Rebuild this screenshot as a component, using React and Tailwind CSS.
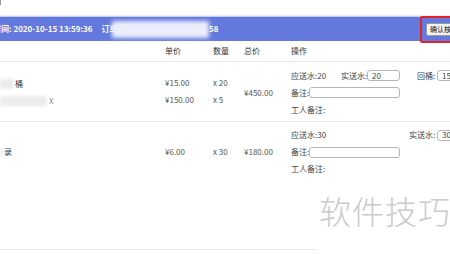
const font = { fontFamily: '"Noto Sans CJK SC", "Liberation Sans", sans-serif' };

const Field = ({ value = '', className = '' }) => (
  <div className={`h-[11px] border border-[#b5b5b5] rounded-[3px] bg-white flex items-center pl-[4px] text-[8px] text-[#444] leading-none ${className}`}>
    {value}
  </div>
);

const Blur = ({ className = '' }) => (
  <span className={`inline-block bg-[#ececec] blur-[1.5px] rounded-[2px] ${className}`} />
);

export default function App() {
  return (
    <div style={font} className="relative w-[450px] h-[254px] overflow-hidden bg-white text-[8px] text-[#333] leading-none">
      <div className="h-[16px] border-b border-[#eef0f8]">
        <div className="w-[1px] h-[5px] bg-[#999]" />
      </div>

      {/* order bar */}
      <div className="h-[25px] bg-[#6479dd] border-t border-[#c6cdf2] flex items-center text-white font-bold text-[8px] whitespace-nowrap">
        <span className="-ml-[7px]">时间: 2020-10-15 13:59:36</span>
        <span className="ml-[9px]">订单号:</span>
        <span className="-ml-[16px] w-[97px] h-[17px] bg-[#eceffb] blur-[2px]" />
        <span>58</span>
      </div>

      {/* header */}
      <div className="h-[21px] grid grid-cols-[165px_48px_31px_47px_1fr] items-center border-b border-[#e8e8e8] text-[#333]">
        <span />
        <span>单价</span>
        <span>数量</span>
        <span>总价</span>
        <span>操作</span>
      </div>

      {/* row 1 */}
      <div className="h-[60px] grid grid-cols-[165px_48px_31px_47px_1fr] items-center border-b border-[#e8e8e8] text-[#555]">
        <div className="flex flex-col gap-[7px] pt-[2px]">
          <div className="flex items-center h-[10px]">
            <Blur className="w-[14px] h-[10px]" />
            <span className="ml-[1px] text-[#333]">桶</span>
          </div>
          <div className="flex items-center h-[10px]">
            <Blur className="w-[47px] h-[10px]" />
            <span className="ml-[2px] text-[#888]">X</span>
          </div>
        </div>
        <div className="flex flex-col gap-[7px] pt-[2px]">
          <span className="h-[10px]">¥15.00</span>
          <span className="h-[10px]">¥150.00</span>
        </div>
        <div className="flex flex-col gap-[7px] pt-[2px]">
          <span className="h-[10px]">x 20</span>
          <span className="h-[10px]">x 5</span>
        </div>
        <span className="pt-[2px]">¥450.00</span>
        <div className="flex flex-col gap-[6px] pt-[2px] whitespace-nowrap text-[#444]">
          <div className="flex items-center h-[11px]">
            <span className="w-[50px]">应送水:20</span>
            <span className="w-[26px]">实送水:</span>
            <Field value="20" className="w-[33px]" />
            <span className="ml-[17px] w-[20px]">回桶:</span>
            <Field value="15" className="w-[30px]" />
          </div>
          <div className="flex items-center h-[11px]">
            <span className="w-[18px]">备注:</span>
            <Field className="w-[91px]" />
          </div>
          <div className="flex items-center h-[11px]">
            <span>工人备注:</span>
          </div>
        </div>
      </div>

      {/* row 2 */}
      <div className="h-[128px] border-b border-[#e8e8e8] pt-[6px] text-[#555]">
        <div className="h-[48px] grid grid-cols-[165px_48px_31px_47px_1fr] items-center">
          <div className="flex items-center h-[10px]">
            <Blur className="w-[3px] h-[9px]" />
            <span className="ml-[1px] text-[#333]">录</span>
          </div>
          <span>¥6.00</span>
          <span>x 30</span>
          <span>¥180.00</span>
          <div className="flex flex-col gap-[6px] whitespace-nowrap text-[#444]">
            <div className="flex items-center h-[11px]">
              <span className="w-[118px]">应送水:30</span>
              <span className="w-[28px]">实送水:</span>
              <Field value="30" className="w-[33px]" />
            </div>
            <div className="flex items-center h-[11px]">
              <span className="w-[18px]">备注:</span>
              <Field className="w-[91px]" />
            </div>
            <div className="flex items-center h-[11px]">
              <span>工人备注:</span>
            </div>
          </div>
        </div>
      </div>

      {/* highlighted confirm button */}
      <div className="absolute left-[420px] top-[16px] w-[40px] h-[27px] border-2 border-[#e0242a] rounded-[2px] flex items-center pl-[4px]">
        <div className="h-[13px] px-[3px] bg-[#f4f4f4] border border-[#9a9a9a] rounded-[2px] flex items-center text-[7px] text-[#111] whitespace-nowrap">
          确认核单
        </div>
      </div>

      {/* watermark */}
      <div className="absolute left-[316px] top-[190px] right-0 bottom-0 bg-white flex items-start pl-[3px] pt-[4px]">
        <span className="text-[32px] font-light tracking-[1px] text-[#cbcbcb] whitespace-nowrap leading-none">软件技巧</span>
      </div>
    </div>
  );
}
